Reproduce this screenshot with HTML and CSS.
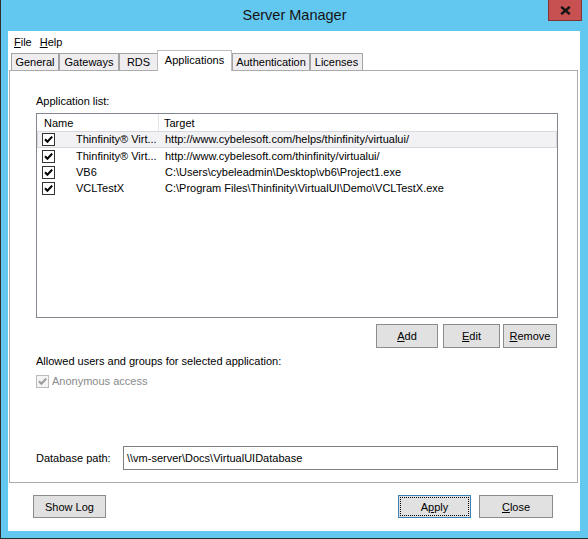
FILE: index.html
```html
<!DOCTYPE html>
<html>
<head>
<meta charset="utf-8">
<title>Server Manager</title>
<link rel="stylesheet" href="styles.css">
</head>
<body>
<div class="window">
  <div class="titlebar">
    <div class="spacer"></div>
    <div class="title">Server Manager</div>
    <div class="close-box">
      <svg class="close-glyph" width="11" height="9" viewBox="0 0 11 9"><path d="M1.2 0.8 L9.8 8.2 M9.8 0.8 L1.2 8.2" fill="none" stroke="#151515" stroke-width="2.4"/></svg>
    </div>
  </div>
  <div class="client">
    <div class="menu">
      <span><u>F</u>ile</span>
      <span><u>H</u>elp</span>
    </div>
    <div class="tabs">
      <div class="tab tab-general">General</div>
      <div class="tab tab-gateways">Gateways</div>
      <div class="tab tab-rds">RDS</div>
      <div class="tab tab-apps active">Applications</div>
      <div class="tab tab-auth">Authentication</div>
      <div class="tab tab-lic">Licenses</div>
    </div>
    <div class="panel">
      <div class="label applist-label">Application list:</div>
      <div class="list">
        <div class="list-head">
          <div class="head-name">Name</div>
          <div class="head-target">Target</div>
        </div>
        <div class="row sel">
          <div class="cell-name"><span class="cb"><svg width="11" height="11" viewBox="0 0 11 11"><path d="M2 5.3 L4.4 7.8 L9.2 2.6" fill="none" stroke="#000" stroke-width="2.1"/></svg></span><span class="name">Thinfinity® Virt...</span></div>
          <div class="cell-target">http://www.cybelesoft.com/helps/thinfinity/virtualui/</div>
        </div>
        <div class="row">
          <div class="cell-name"><span class="cb"><svg width="11" height="11" viewBox="0 0 11 11"><path d="M2 5.3 L4.4 7.8 L9.2 2.6" fill="none" stroke="#000" stroke-width="2.1"/></svg></span><span class="name">Thinfinity® Virt...</span></div>
          <div class="cell-target">http://www.cybelesoft.com/thinfinity/virtualui/</div>
        </div>
        <div class="row">
          <div class="cell-name"><span class="cb"><svg width="11" height="11" viewBox="0 0 11 11"><path d="M2 5.3 L4.4 7.8 L9.2 2.6" fill="none" stroke="#000" stroke-width="2.1"/></svg></span><span class="name">VB6</span></div>
          <div class="cell-target">C:\Users\cybeleadmin\Desktop\vb6\Project1.exe</div>
        </div>
        <div class="row">
          <div class="cell-name"><span class="cb"><svg width="11" height="11" viewBox="0 0 11 11"><path d="M2 5.3 L4.4 7.8 L9.2 2.6" fill="none" stroke="#000" stroke-width="2.1"/></svg></span><span class="name">VCLTestX</span></div>
          <div class="cell-target">C:\Program Files\Thinfinity\VirtualUI\Demo\VCLTestX.exe</div>
        </div>
      </div>
      <div class="list-buttons">
        <div class="btn btn-add"><span><u>A</u>dd</span></div>
        <div class="btn btn-edit"><span><u>E</u>dit</span></div>
        <div class="btn btn-remove"><span><u>R</u>emove</span></div>
      </div>
      <div class="label allowed-label">Allowed users and groups for selected application:</div>
      <div class="anon">
        <span class="cb dis"><svg width="11" height="11" viewBox="0 0 11 11"><path d="M2 5.3 L4.4 7.8 L9.2 2.6" fill="none" stroke="#9a9a9a" stroke-width="2.1"/></svg></span>
        <span class="anon-text">Anonymous access</span>
      </div>
      <div class="db-row">
        <div class="db-label">Database path:</div>
        <div class="textbox">\\vm-server\Docs\VirtualUIDatabase</div>
      </div>
    </div>
    <div class="footer">
      <div class="btn btn-log"><span>Show Log</span></div>
      <div class="footer-right">
        <div class="btn btn-apply"><span>A<u>p</u>ply</span></div>
        <div class="btn btn-close"><span><u>C</u>lose</span></div>
      </div>
    </div>
  </div>
</div>
</body>
</html>
```
FILE: styles.css
```css
* { box-sizing: border-box; }
html, body { margin: 0; padding: 0; }
body {
  width: 588px;
  height: 539px;
  overflow: hidden;
  background: #63c8f0;
  font-family: "Liberation Sans", Arial, sans-serif;
  font-size: 11px;
  color: #000;
}
u { text-decoration: underline; text-underline-offset: 1px; }

.window {
  width: 588px;
  height: 539px;
  background: #63c8f0;
  border-left: 1px solid #2e2e2e;
  border-bottom: 1px solid #2e2e2e;
  display: flex;
  flex-direction: column;
}

.titlebar {
  height: 31px;
  display: grid;
  grid-template-columns: 1fr auto 1fr;
  align-items: start;
}
.title {
  font-size: 14.5px;
  line-height: 30px;
  color: #141414;
}
.close-box {
  justify-self: end;
  margin-right: 6px;
  width: 34px;
  height: 21px;
  background: #c75050;
  border: 1px solid #7e3434;
  border-top: none;
  display: flex;
  align-items: center;
  justify-content: center;
}
.close-glyph { display: block; margin-top: 1px; }

.client {
  margin-left: 7px;
  width: 572px;
  height: 500px;
  background: #fff;
  display: flex;
  flex-direction: column;
}

.menu {
  height: 19px;
  padding: 3px 0 0 6px;
  line-height: 16px;
  display: flex;
  gap: 8px;
}

.tabs {
  height: 20px;
  display: flex;
  align-items: flex-end;
  padding-left: 3px;
}
.tab {
  height: 17px;
  border: 1px solid #a3a3a3;
  border-bottom: none;
  background: #f0edf0;
  text-align: center;
  line-height: 16px;
  white-space: nowrap;
}
.tab-general { width: 48px; }
.tab-gateways { width: 60px; }
.tab-rds { width: 39px; }
.tab-apps { width: 75px; }
.tab-auth { width: 78px; }
.tab-lic { width: 53px; }
.tab.active {
  height: 21px;
  margin-left: -1px;
  margin-bottom: -1px;
  background: #fff;
  border-color: #bdbdbd;
  line-height: 18px;
  position: relative;
  z-index: 1;
}

.panel {
  margin-left: 1px;
  width: 569px;
  height: 413px;
  border: 1px solid #ababab;
  padding: 0 19px 0 26px;
  display: flex;
  flex-direction: column;
}
.label { line-height: 13px; white-space: nowrap; }
.applist-label { margin-top: 24px; }

.list {
  margin-top: 5px;
  height: 205px;
  border: 1px solid #828790;
  display: flex;
  flex-direction: column;
}
.list-head {
  height: 17px;
  display: flex;
  padding-top: 1px;
  line-height: 16px;
}
.head-name {
  width: 122px;
  padding-left: 7px;
  border-right: 1px solid #e5e5e5;
  margin-top: -1px;
  padding-top: 1px;
}
.head-target { padding-left: 5px; }

.row {
  height: 16px;
  display: flex;
  align-items: center;
  line-height: 16px;
  white-space: nowrap;
}
.row.sel {
  height: 17px;
  background: #f2f1f4;
  box-shadow: inset 0 0 0 1px #d9d8de;
}
.row.sel .cell-name,
.row.sel .cell-target { line-height: 16px; padding-bottom: 1px; }
.cell-name {
  width: 122px;
  display: flex;
  align-items: center;
  padding-left: 5px;
}
.cell-target { padding-left: 6px; }
.name { margin-left: 21px; }

.cb {
  width: 13px;
  height: 13px;
  border: 1px solid #333;
  background: #fff;
  display: flex;
  flex: none;
}
.cb svg { display: block; }
.cb.dis {
  border-color: #bcbcbc;
  background: #f4f4f4;
}

.list-buttons {
  margin-top: 6px;
  height: 24px;
  display: flex;
  justify-content: flex-end;
  padding-right: 1px;
}
.btn {
  height: 100%;
  background: #e1e1e1;
  border: 1px solid #8c8c8c;
  display: flex;
  align-items: center;
  justify-content: center;
  white-space: nowrap;
}
.btn-add { width: 62px; }
.btn-edit { width: 57px; margin-left: 5px; }
.btn-remove { width: 54px; margin-left: 3px; }

.allowed-label { margin-top: 7px; }

.anon {
  margin-top: 7px;
  height: 13px;
  display: flex;
  align-items: center;
  line-height: 13px;
}
.anon-text { margin-left: 3px; color: #8a8a8a; }

.db-row {
  margin-top: 58px;
  height: 24px;
  display: flex;
  align-items: center;
}
.db-label { width: 87px; }
.textbox {
  width: 435px;
  height: 24px;
  border: 1px solid #7f7f7f;
  padding-left: 3px;
  line-height: 22px;
  white-space: nowrap;
}

.footer {
  margin-top: 12px;
  height: 23px;
  display: flex;
  justify-content: space-between;
  padding: 0 27px 0 25px;
}
.footer-right { display: flex; gap: 8px; }
.btn-log { width: 73px; }
.btn-apply {
  width: 73px;
  border-color: #3c7fb1;
  outline: 1px dotted #000;
  outline-offset: -3px;
}
.btn-close { width: 74px; }
```
